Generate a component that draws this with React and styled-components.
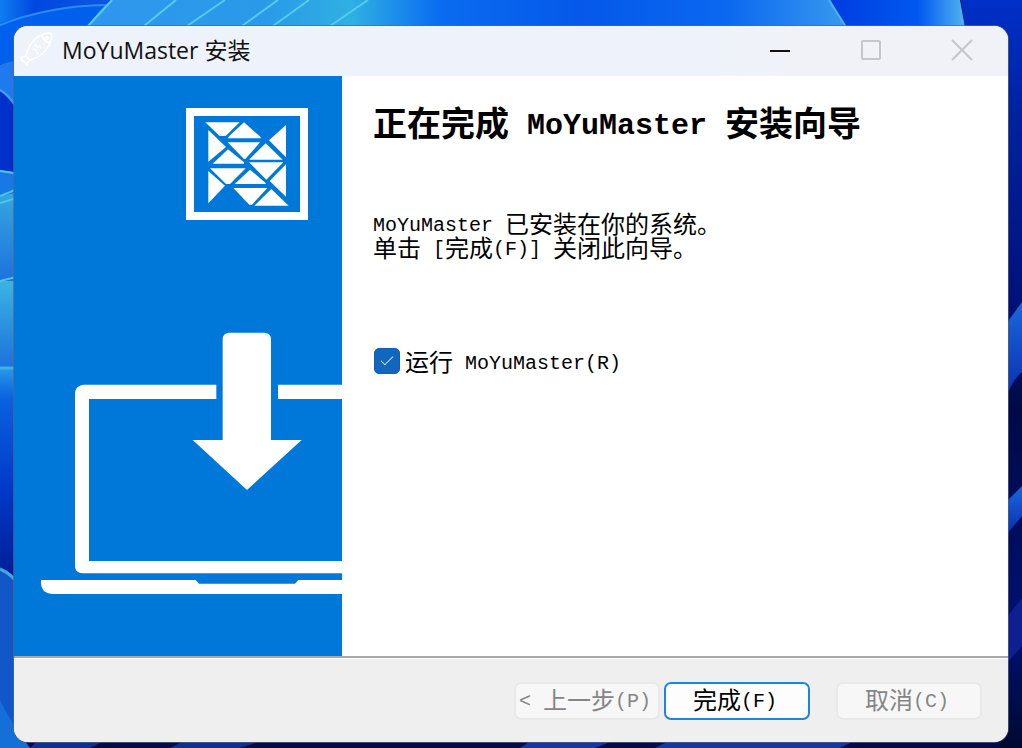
import React, { useState } from 'react';
import styled, { createGlobalStyle } from 'styled-components';

const triangles = [
  '106,82 209,82 167,123 149,123',
  '222,82 272,126 272,130 173,130 178,123',
  '348,90 348,187 297,136',
  '115,105 168,156 115,200',
  '173,142 270,142 226,192 222,192',
  '174,163 222,202 222,206 128,206',
  '287,145 338,194 237,194',
  '120,220 227,220 180,267 168,267',
  '237,202 340,202 289,254',
  '240,224 287,264 287,267 194,267',
  '115,228 165,272 115,325',
  '348,208 348,305 299,258',
  '190,279 292,279 246,329 238,329',
  '304,282 356,332 253,332',
];

const GlobalStyle = createGlobalStyle`
  *, *::before, *::after {
    box-sizing: border-box;
  }
  body {
    margin: 0;
  }
`;

function Wallpaper () {
  return (
    <WallpaperSvg viewBox="0 0 1022 748" preserveAspectRatio="none" aria-hidden="true">
      <defs>
        <linearGradient id="sky" x1="0" x2="1" y1="0" y2="0">
          <stop offset="0" stopColor="#0f7df0" />
          <stop offset="0.1" stopColor="#0047e0" />
          <stop offset="0.26" stopColor="#0a55e0" />
          <stop offset="1" stopColor="#0a6df5" />
        </linearGradient>
        <linearGradient id="petals" x1="0" x2="1" y1="0" y2="0">
          <stop offset="0" stopColor="#2f97ee" />
          <stop offset="0.5" stopColor="#2a9ae8" />
          <stop offset="0.75" stopColor="#2fb0e2" />
          <stop offset="1" stopColor="#0a6cf0" />
        </linearGradient>
        <linearGradient id="top" x1="0" x2="1" y1="0" y2="0">
          <stop offset="0" stopColor="#0a6cf0" />
          <stop offset="0.35" stopColor="#0558ea" />
          <stop offset="0.7" stopColor="#0a68f0" />
          <stop offset="1" stopColor="#3a9aee" />
        </linearGradient>
        <linearGradient id="topRight" x1="0" x2="1" y1="0" y2="0">
          <stop offset="0" stopColor="#003ce0" />
          <stop offset="0.65" stopColor="#0058f0" />
          <stop offset="1" stopColor="#52b4f0" />
        </linearGradient>
        <linearGradient id="cyanLeaf" x1="0" x2="0" y1="0" y2="1">
          <stop offset="0" stopColor="#3cb4e2" />
          <stop offset="1" stopColor="#1c70dc" />
        </linearGradient>
        <linearGradient id="deepLeaf" x1="0" x2="0" y1="0" y2="1">
          <stop offset="0" stopColor="#2a9ae8" />
          <stop offset="0.15" stopColor="#0a62e0" />
          <stop offset="0.6" stopColor="#0038c8" />
          <stop offset="1" stopColor="#001f98" />
        </linearGradient>
        <linearGradient id="rightEdge" x1="0" x2="0" y1="0" y2="1">
          <stop offset="0" stopColor="#0030c8" />
          <stop offset="0.15" stopColor="#0022a0" />
          <stop offset="0.4" stopColor="#00127a" />
          <stop offset="0.55" stopColor="#000a48" />
          <stop offset="0.85" stopColor="#001070" />
          <stop offset="1" stopColor="#000a30" />
        </linearGradient>
        <linearGradient id="ray" x1="0" x2="0" y1="0" y2="1">
          <stop offset="0" stopColor="#1a66dc" />
          <stop offset="1" stopColor="#0a2fae" />
        </linearGradient>
      </defs>
      <rect width="1022" height="748" fill="#000c4a" />
      <rect width="350" height="90" fill="url(#sky)" />
      <path d="M0 23Q55 5 110 5L90 26L0 70Z" fill="#0060ee" />
      <path d="M0 25Q48 6 106 5" fill="none" stroke="#2a8cf4" strokeWidth="2" />
      <path d="M112 0H440V27H88Q98 10 112 0Z" fill="url(#petals)" />
      <path d="M88 26L112 0M144 26L176 0M187 26L225 0M242 26L278 0M273 26L309 0M330 26L368 0" stroke="#54ccee" strokeWidth="2" />
      <rect x="439" width="411" height="27" fill="url(#top)" />
      <path d="M830 0H960L965 27H846Z" fill="url(#topRight)" />
      <path d="M829 0L846 27" stroke="#4cb4f4" strokeWidth="2" />
      <path d="M961 0H1022V748H1000V27H965Z" fill="url(#rightEdge)" />
      <rect y="64" width="20" height="110" fill="#0030cc" />
      <path d="M0 65Q8 62 20 60V110Q10 95 0 90Z" fill="#1f7af0" />
      <path d="M0 90Q8 94 20 112" fill="none" stroke="#3ea4f4" strokeWidth="2" />
      <path d="M0 170L20 173V284H0Z" fill="url(#cyanLeaf)" />
      <path d="M0 171L20 174V192L0 196Z" fill="#1878e4" />
      <rect y="281" width="20" height="88" fill="url(#cyanLeaf)" />
      <path d="M0 196L20 188M0 203L20 197M0 281L20 276M0 171L20 174" stroke="#4cc4e8" strokeWidth="2" />
      <rect y="367" width="20" height="208" fill="url(#deepLeaf)" />
      <path d="M0 368H20" stroke="#3cb0e8" strokeWidth="3" />
      <path d="M0 570Q12 574 22 588V748H0Z" fill="#1257c8" />
      <path d="M0 569Q12 574 22 588" fill="none" stroke="#40a8e4" strokeWidth="3" />
      <path d="M1022 302L1006 324V398Q1012 380 1022 372Z" fill="url(#ray)" />
      <path d="M1022 486L1006 502V535L1022 516Z" fill="url(#ray)" />
      <path d="M1022 598L1006 618V664L1022 646Z" fill="#101f90" />
      <path d="M30 748L40 738H110L90 748ZM170 748L190 738H270L240 748Z" fill="#0c2f98" />
      <path d="M520 748L535 738H620L595 748ZM655 748L675 738H860L840 748Z" fill="#1238a8" />
      <path d="M0 700Q8 718 30 748H0Z" fill="#1470d8" />
    </WallpaperSvg>
  );
}

function FishIcon () {
  return (
    <svg width="34" height="36" viewBox="0 0 34 36" fill="none" stroke="#fff" strokeWidth="1.6" strokeLinejoin="round" strokeLinecap="round" aria-hidden="true">
      <path d="M31 1.5Q26 0 21 3Q14 7 10 13Q7 18 6 24L1 25.5L2.5 29L5 30L6.5 33L9 28Q16 27 22 22Q29 16 31 8Q32 4 31 1.5Z" />
      <path d="M22 3Q23 9 29.5 11M15 12L16 14L18 15M14 17L16 18L18 22M20 14L21 16M6 24L9 27" />
      <circle cx="27" cy="6" r="1" />
    </svg>
  );
}

function InstallArtwork () {
  return (
    <svg width="328" height="580" viewBox="0 0 328 580" aria-hidden="true">
      <rect x="176" y="36" width="114" height="104" fill="none" stroke="#fff" strokeWidth="8" />
      <g transform="translate(156 19) scale(0.33333)" fill="#fff">
        {triangles.map((points) => <polygon key={points} points={points} />)}
      </g>
      <g transform="translate(6 244) scale(0.33333)" fill="#fff">
        <path d="M626 38H735Q753 40 753 58V360H845L681 510L518 360H608V58Q608 40 626 38Z" />
        <path d="M589 194H190Q165 198 165 220V742Q168 760 190 760H967V723H207V237H589Z" />
        <path d="M774 194H967V237H774Z" />
        <path d="M63 780H527L537 791H825L835 780H967V822H95Q63 818 63 790Z" />
      </g>
    </svg>
  );
}

export default function App () {
  const [runApp, setRunApp] = useState(true);

  return (
    <Desktop>
      <GlobalStyle />
      <Wallpaper />
      <InstallerWindow>
        <TitleBar>
          <FishIcon />
          <WindowTitle>MoYuMaster 安装</WindowTitle>
          <WindowButton type="button" aria-label="最小化">
            <svg width="22" height="22" viewBox="0 0 22 22" stroke="#111" strokeWidth="2"><path d="M1 12H21" /></svg>
          </WindowButton>
          <WindowButton type="button" aria-label="最大化" disabled>
            <svg width="22" height="22" viewBox="0 0 22 22" fill="none" stroke="#c4c6ca" strokeWidth="2"><rect x="2" y="2" width="18" height="18" rx="1" /></svg>
          </WindowButton>
          <WindowButton type="button" aria-label="关闭" disabled>
            <svg width="22" height="22" viewBox="0 0 22 22" stroke="#c4c6ca" strokeWidth="2"><path d="M1 1L21 21M21 1L1 21" /></svg>
          </WindowButton>
        </TitleBar>
        <Page>
          <Banner>
            <InstallArtwork />
          </Banner>
          <Content>
            <Heading>
              正在完成
              <HeadingLatin> MoYuMaster </HeadingLatin>
              安装向导
            </Heading>
            <Message>
              <Latin>MoYuMaster </Latin>
              已安装在你的系统。
              <br />
              单击
              <Latin> [</Latin>
              完成
              <Latin>(F)] </Latin>
              关闭此向导。
            </Message>
            <RunOption>
              <CheckBox type="checkbox" checked={runApp} onChange={() => setRunApp(!runApp)} />
              <span>
                运行
                <Latin> MoYuMaster(R)</Latin>
              </span>
            </RunOption>
          </Content>
        </Page>
        <Footer>
          <WizardButton type="button" disabled>
            <Latin>&lt; </Latin>
            上一步
            <Latin>(P)</Latin>
          </WizardButton>
          <WizardButton type="button" $primary>
            完成
            <Latin>(F)</Latin>
          </WizardButton>
          <CancelButton type="button" disabled>
            取消
            <Latin>(C)</Latin>
          </CancelButton>
        </Footer>
      </InstallerWindow>
    </Desktop>
  );
}

const Desktop = styled.div`
  position: relative;
  display: flex;
  min-height: 100vh;
  padding: 26px 14px 6px;
  font-family: 'Noto Sans CJK SC', sans-serif;
`;

const WallpaperSvg = styled.svg`
  position: absolute;
  inset: 0;
  width: 100%;
  height: 100%;
`;

const InstallerWindow = styled.main`
  position: relative;
  display: flex;
  flex: 1;
  flex-direction: column;
  min-width: 0;
  overflow: hidden;
  border-radius: 14px;
  background: #fff;
  box-shadow: 0 0 0 1px rgba(90, 100, 130, 0.7);
`;

const TitleBar = styled.header`
  display: flex;
  align-items: center;
  height: 50px;
  padding: 0 1px 2px 6px;
  background: linear-gradient(90deg, #eef3fb 70%, #f1f2f8 80%);
`;

const WindowTitle = styled.h1`
  flex: 1;
  margin: 0;
  padding-left: 8px;
  color: #111;
  font: 400 23px/48px 'Open Sans', 'Noto Sans CJK SC', sans-serif;
  white-space: nowrap;
`;

const WindowButton = styled.button`
  display: flex;
  align-items: center;
  justify-content: center;
  width: 91px;
  height: 48px;
  padding: 0;
  border: 0;
  background: none;
`;

const Page = styled.div`
  display: flex;
  flex: 1;
`;

const Banner = styled.aside`
  flex: none;
  width: 328px;
  background: #0078d9;

  svg {
    display: block;
  }
`;

const Content = styled.section`
  flex: 1;
  padding: 26px 31px;
  color: #000;
`;

const Heading = styled.h2`
  margin: 0;
  font-size: 34px;
  font-weight: 700;
  line-height: 40px;
  white-space: pre;
`;

// Zero line height keeps the smaller Latin runs from stretching the line
const Latin = styled.span`
  font-family: 'Liberation Mono', monospace;
  font-size: 20px;
  line-height: 0;
  vertical-align: 2px;
  white-space: pre;
`;

const HeadingLatin = styled(Latin)`
  font-size: 30px;
`;

const Message = styled.p`
  margin: 69px 0 0;
  font-size: 24px;
  line-height: 24px;
`;

const RunOption = styled.label`
  display: flex;
  align-items: center;
  gap: 5px;
  margin-top: 86px;
  font-size: 24px;
  line-height: 32px;
`;

const CheckBox = styled.input`
  appearance: none;
  width: 26px;
  height: 26px;
  margin: 0 0 0 1px;
  border: 1px solid #0f5fb4;
  border-radius: 5px;
  background: #fff;

  &:checked {
    background: #1166bd;
  }

  &:checked::before {
    content: '';
    display: block;
    width: 12px;
    height: 6px;
    margin: 7px 0 0 6px;
    border: solid #d4e6f8;
    border-width: 0 0 1px 1px;
    transform: rotate(-45deg);
  }
`;

const Footer = styled.footer`
  display: flex;
  justify-content: flex-end;
  gap: 4px;
  height: 86px;
  padding: 24px 26px;
  border-top: 2px solid #a8a8a8;
  background: #efefef;
  box-shadow: inset 0 1px #fff;
`;

const WizardButton = styled.button`
  width: 146px;
  height: 38px;
  padding: 0 4px 4px 0;
  border: ${({ $primary }) => ($primary ? '2px solid #1c86dc' : '2px solid #e9e9e9')};
  border-radius: 7px;
  background: ${({ $primary }) => ($primary ? '#fdfdfd' : '#f7f7f7')};
  color: #000;
  font-family: inherit;
  font-size: 24px;
  line-height: 30px;
  white-space: nowrap;

  &:disabled {
    color: #858585;
  }
`;

const CancelButton = styled(WizardButton)`
  margin-left: 22px;
`;
